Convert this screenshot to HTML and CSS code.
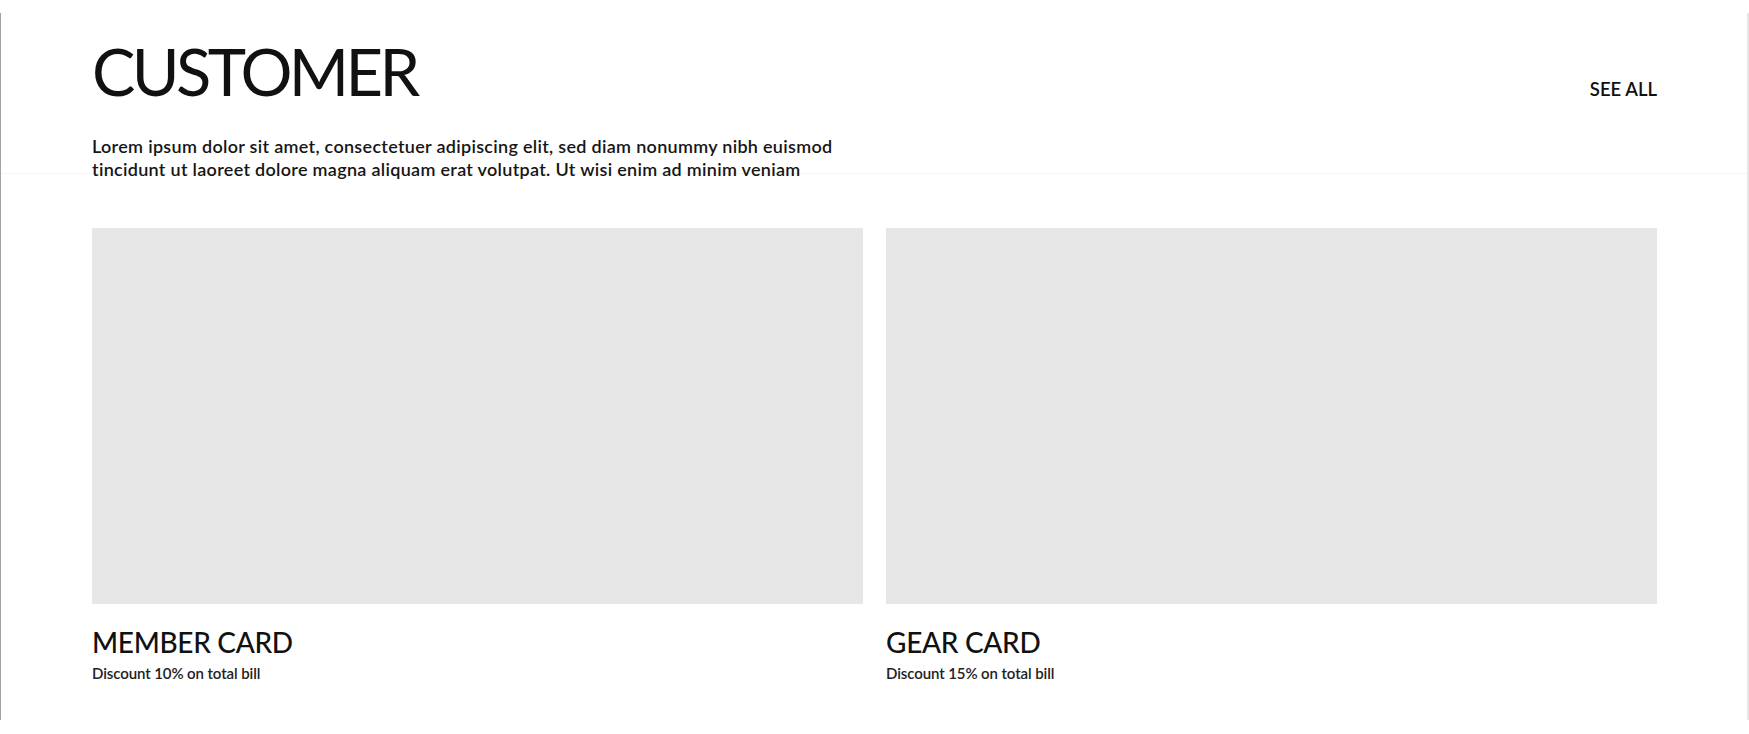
FILE: index.html
```html
<!DOCTYPE html>
<html lang="en">
<head>
<meta charset="utf-8">
<title>Customer</title>
<link rel="stylesheet" href="styles.css">
</head>
<body>
<div class="frame">
  <header class="head">
    <h1 class="title">CUSTOMER</h1>
    <a class="see-all" href="#">SEE ALL</a>
  </header>
  <p class="intro">Lorem ipsum dolor sit amet, consectetuer adipiscing elit, sed diam nonummy nibh euismod<br>tincidunt ut laoreet dolore magna aliquam erat volutpat. Ut wisi enim ad minim veniam</p>
  <section class="cards">
    <article class="card">
      <div class="card-img"></div>
      <h2 class="card-title">MEMBER CARD</h2>
      <p class="card-desc">Discount 10% on total bill</p>
    </article>
    <article class="card">
      <div class="card-img"></div>
      <h2 class="card-title">GEAR CARD</h2>
      <p class="card-desc">Discount 15% on total bill</p>
    </article>
  </section>
</div>
</body>
</html>
```
FILE: styles.css
```css
* { box-sizing: border-box; }
html, body { margin: 0; padding: 0; background: #fff; }
body {
  font-family: Lato, "Noto Sans", sans-serif;
  color: #111;
}
.frame {
  position: relative;
  margin-top: 13px;
  width: 1749px;
  height: 707px;
  border-left: 1px solid #a3a3a3;
  border-right: 2px solid #e6e6e6;
  padding: 23px 90px 0 91px;
}
.frame::before {
  content: "";
  position: absolute;
  left: 0;
  right: 0;
  top: 160px;
  height: 1px;
  background: #f4f4f4;
}
.head {
  position: relative;
  display: flex;
  justify-content: space-between;
  align-items: baseline;
}
.title {
  margin: 0;
  font-size: 65px;
  line-height: 70px;
  font-weight: 400;
  letter-spacing: -3.6px;
}
.see-all {
  font-size: 18.5px;
  font-weight: 600;
  color: #111;
  text-decoration: none;
}
.intro {
  position: relative;
  margin: 29px 0 0;
  font-size: 18px;
  line-height: 23px;
  font-weight: 600;
  letter-spacing: 0.3px;
  color: #161616;
}
.cards {
  display: grid;
  grid-template-columns: 771px 771px;
  column-gap: 23px;
  margin-top: 47px;
}
.card-img {
  height: 376px;
  background: #e6e6e6;
}
.card-title {
  margin: 21px 0 0;
  font-size: 28px;
  line-height: 34px;
  font-weight: 500;
  letter-spacing: -0.3px;
}
.card-desc {
  margin: 5px 0 0;
  font-size: 15px;
  line-height: 18px;
  font-weight: 600;
  letter-spacing: -0.1px;
  color: #222;
}
```
